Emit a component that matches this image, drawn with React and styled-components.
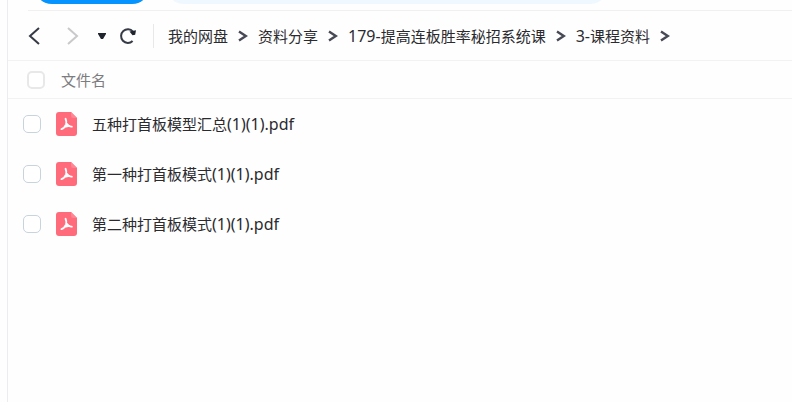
import React, { useState } from "react";
import styled, { createGlobalStyle } from "styled-components";

/*
Blue: 0593ff
Pale blue: f0f8ff
Text: 2b2b2f
Line: f2f2f3
*/

const GlobalStyle = createGlobalStyle`
  * {
    box-sizing: border-box;
  }

  body {
    margin: 0;
    background-color: #fefefe;
    color: #2b2b2f;
    font-family: "Noto Sans", "Noto Sans CJK SC", sans-serif;
    font-size: 15px;
    line-height: 24px;
  }
`;

const Page = styled.div`
  display: flex;
  min-height: 100vh;
`;

const SideEdge = styled.aside`
  flex: none;
  width: 8px;
  border-right: 1px solid #ececee;
`;

const Main = styled.main`
  flex: 1;
  min-width: 0;
`;

const TopBar = styled.div`
  display: flex;
  align-items: flex-end;
  gap: 16px;
  height: 11px;
  margin-left: 20px;
  padding: 0 0 7px 6px;
  overflow: hidden;
  box-shadow: inset 0 -1px 0 #f0f0f1;
`;

const UploadButton = styled.button`
  flex: none;
  width: 116px;
  height: 36px;
  border: none;
  border-radius: 18px;
  background-color: #0593ff;
  cursor: pointer;
`;

const SearchInput = styled.input`
  flex: 0 1 442px;
  min-width: 0;
  height: 36px;
  margin: 0;
  padding: 0 18px;
  border: none;
  border-radius: 18px;
  background-color: #f0f8ff;
`;

const Toolbar = styled.div`
  display: flex;
  align-items: center;
  height: 50px;
  padding-left: 8px;
  border-bottom: 1px solid #f2f2f3;
`;

const IconButton = styled.button`
  display: flex;
  align-items: center;
  justify-content: center;
  flex: none;
  width: ${({ $width }) => $width}px;
  height: 24px;
  padding: 0;
  border: none;
  background: none;
  color: #353a45;
  cursor: pointer;

  &:disabled {
    color: #c9c9cb;
    cursor: default;
  }

  svg {
    flex: none;
  }
`;

const Divider = styled.span`
  width: 1px;
  height: 24px;
  margin: 0 14px 0 7px;
  background-color: #e8e8ea;
`;

const Crumbs = styled.ol`
  display: flex;
  align-items: center;
  margin: 0;
  padding: 0;
  list-style: none;
  white-space: nowrap;

  li {
    display: flex;
    align-items: center;
  }

  a {
    color: inherit;
    text-decoration: none;
  }

  svg {
    margin: 0 10px;
  }
`;

const FileTable = styled.table`
  width: 100%;
  border-collapse: collapse;

  th,
  td {
    padding: 0;
    font-weight: normal;
    text-align: left;
  }
`;

const HeadCell = styled.div`
  display: flex;
  align-items: center;
  gap: 16px;
  height: 38px;
  padding-left: 19px;
  border-bottom: 1px solid #f2f2f3;
  color: #7c7c80;
`;

const FileCell = styled.div`
  display: flex;
  align-items: center;
  height: 50px;
  padding-left: 15px;

  svg {
    margin: 0 14px;
  }
`;

const Checkbox = styled.input`
  flex: none;
  appearance: none;
  width: 18px;
  height: 18px;
  margin: 0;
  border: ${({ $head }) => ($head ? "2px solid #e8e8e9" : "1px solid #c8d3dc")};
  border-radius: 5px;
  background-color: #fff;
  cursor: pointer;

  &:checked {
    border-color: #0593ff;
    background-color: #0593ff;
  }
`;

/* latin letters run one step larger than the chinese ones */
const Latin = styled.span`
  font-size: 16px;
`;

const MixedText = ({ text }) =>
  text
    .split(/([\x21-\x7e]+)/)
    .filter(Boolean)
    .map((part, i) => (/^[\x21-\x7e]/.test(part) ? <Latin key={i}>{part}</Latin> : part));

const BackIcon = () => (
  <svg width="14" height="20" viewBox="0 0 14 20" fill="none" stroke="currentColor" strokeWidth="2">
    <path d="M12 2 3 10l9 8" />
  </svg>
);

const ForwardIcon = () => (
  <svg width="14" height="20" viewBox="0 0 14 20" fill="none" stroke="currentColor" strokeWidth="2">
    <path d="m2 2 9 8-9 8" />
  </svg>
);

const CaretIcon = () => (
  <svg width="8" height="8" viewBox="0 0 8 8" fill="#20242d">
    <path d="M0 1h8v1L5 7H3L0 2z" />
  </svg>
);

const RefreshIcon = () => (
  <svg width="18" height="18" viewBox="0 0 18 18" fill="none">
    <path d="M13.6 14A6.8 6.8 0 1 1 14 4.6" stroke="currentColor" strokeWidth="2" />
    <path d="m10.500 4.500 6.500-1.300-.8 4.600-2.700.4z" fill="#20242d" />
  </svg>
);

const CrumbArrow = () => (
  <svg width="10" height="12" viewBox="0 0 10 12" fill="none" stroke="#474955" strokeWidth="2.400">
    <path d="M1 1.500 7.800 6 1 10.500" />
  </svg>
);

const PdfIcon = () => (
  <svg width="23" height="26" viewBox="0 0 23 26" fill="none">
    <path
      d="M4 1h12l6 6v15a3 3 0 0 1-3 3H4a3 3 0 0 1-3-3V4a3 3 0 0 1 3-3z"
      fill="#ff6b7a"
    />
    <path d="m16 1 6 6h-4a2 2 0 0 1-2-2z" fill="#ff8692" />
    <path
      d="M10.600 7.800c.9 2 .9 3.800.5 5.400-.8 2.400-2.500 4.200-4.600 4.900M11.200 12.200c1.300 2 3.200 3.200 5.600 3.400M9.600 15.800l5-.9"
      stroke="#fff"
      strokeWidth="1.900"
      strokeLinecap="round"
    />
  </svg>
);

const crumbs = ["我的网盘", "资料分享", "179-提高连板胜率秘招系统课", "3-课程资料"];

const files = [
  { key: "file1", name: "五种打首板模型汇总(1)(1).pdf" },
  { key: "file2", name: "第一种打首板模式(1)(1).pdf" },
  { key: "file3", name: "第二种打首板模式(1)(1).pdf" },
];

const App = () => {
  const [checkedKeys, setCheckedKeys] = useState([]);
  const isAllChecked = checkedKeys.length === files.length;

  const onChangeAll = () => setCheckedKeys(isAllChecked ? [] : files.map((file) => file.key));

  const onChangeFile = (key) => {
    setCheckedKeys((prev) =>
      prev.includes(key) ? prev.filter((item) => item !== key) : [...prev, key]
    );
  };

  return (
    <Page>
      <GlobalStyle />
      <SideEdge />
      <Main>
        <TopBar>
          <UploadButton type="button" aria-label="上传" />
          <SearchInput type="search" aria-label="搜索" />
        </TopBar>
        <Toolbar>
          <IconButton type="button" $width={36} aria-label="后退">
            <BackIcon />
          </IconButton>
          <IconButton type="button" $width={42} aria-label="前进" disabled>
            <ForwardIcon />
          </IconButton>
          <IconButton type="button" $width={16} aria-label="历史">
            <CaretIcon />
          </IconButton>
          <IconButton type="button" $width={36} aria-label="刷新">
            <RefreshIcon />
          </IconButton>
          <Divider />
          <nav>
            <Crumbs>
              {crumbs.map((crumb) => (
                <li key={crumb}>
                  <a href="#">
                    <MixedText text={crumb} />
                  </a>
                  <CrumbArrow />
                </li>
              ))}
            </Crumbs>
          </nav>
        </Toolbar>
        <FileTable>
          <thead>
            <tr>
              <th>
                <HeadCell>
                  <Checkbox
                    $head
                    type="checkbox"
                    id="allCheck"
                    checked={isAllChecked}
                    onChange={onChangeAll}
                  />
                  <label htmlFor="allCheck">文件名</label>
                </HeadCell>
              </th>
            </tr>
          </thead>
          <tbody>
            {files.map((file) => (
              <tr key={file.key}>
                <td>
                  <FileCell>
                    <Checkbox
                      type="checkbox"
                      id={file.key}
                      checked={checkedKeys.includes(file.key)}
                      onChange={() => onChangeFile(file.key)}
                    />
                    <PdfIcon />
                    <label htmlFor={file.key}>
                      <MixedText text={file.name} />
                    </label>
                  </FileCell>
                </td>
              </tr>
            ))}
          </tbody>
        </FileTable>
      </Main>
    </Page>
  );
};

export default App;
